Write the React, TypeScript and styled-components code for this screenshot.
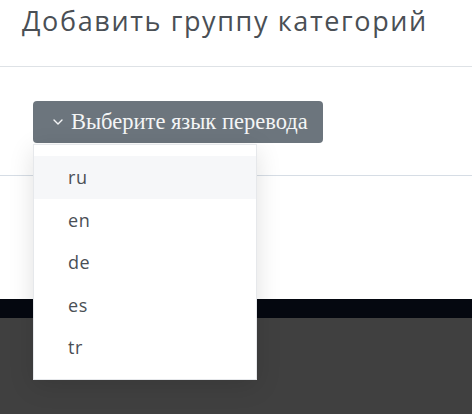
import React from "react";
import styled, { createGlobalStyle } from "styled-components";

const Global = createGlobalStyle`
  html, body { margin: 0; padding: 0; background: #404040; }
  body { font-family: "Open Sans", "Liberation Sans", sans-serif; }
  #root { min-height: 414px; }
`;

const Page = styled.div`
  display: flex;
  flex-direction: column;
  min-height: 414px;
  background: #404040;
`;

const Card = styled.div`
  background: #fff;
  height: 299px;
  display: flex;
  flex-direction: column;
`;

const Header = styled.div`
  height: 67px;
  box-sizing: border-box;
  border-bottom: 1px solid #dee2e6;
  padding: 3px 22px 0;
`;

const Title = styled.h2`
  margin: 0;
  font-family: "Open Sans", "Liberation Sans", sans-serif;
  font-weight: 400;
  font-size: 27px;
  line-height: 36px;
  color: #4a4f55;
  letter-spacing: 1.62px;
`;

const Body = styled.div`
  height: 109px;
  box-sizing: border-box;
  border-bottom: 1px solid #d6dde5;
  padding: 34px 33px 0;
`;

const DropWrap = styled.div`
  position: relative;
  display: inline-block;
`;

const Toggle = styled.button`
  display: flex;
  align-items: center;
  gap: 7px;
  height: 42px;
  width: 290px;
  box-sizing: border-box;
  padding: 0 8px 0 19px;
  border: none;
  border-radius: 4px;
  background: #6c757d;
  color: #f4f5f6;
  font-family: "Liberation Serif", serif;
  font-size: 22.5px;
  white-space: nowrap;
  cursor: pointer;
`;

const Menu = styled.ul`
  position: absolute;
  top: 43px;
  left: 0;
  width: 224px;
  margin: 0;
  padding: 11px 0 10px;
  list-style: none;
  background: #fff;
  border: 1px solid #e6e8eb;
  box-sizing: border-box;
  box-shadow: 0 6px 24px rgba(0, 0, 0, 0.12);
  z-index: 5;
`;

const Item = styled.li<{ $active?: boolean }>`
  height: 42.5px;
  display: flex;
  align-items: center;
  padding-left: 34px;
  font-family: "Open Sans", "Liberation Sans", sans-serif;
  font-size: 18px;
  letter-spacing: 0.6px;
  color: #4a4f55;
  background: ${(p) => (p.$active ? "#f6f7f9" : "transparent")};
`;

const Band = styled.div`
  height: 19px;
  background: #050810;
`;

const Chevron = () => (
  <svg width="12" height="12" viewBox="0 0 12 12" fill="none">
    <path d="M2 4l4 4 4-4" stroke="#f4f5f6" strokeWidth="1.4" strokeLinecap="round" strokeLinejoin="round" />
  </svg>
);

export default function App() {
  const langs = ["ru", "en", "de", "es", "tr"];
  return (
    <Page>
      <Global />
      <Card>
        <Header>
          <Title>Добавить группу категорий</Title>
        </Header>
        <Body>
          <DropWrap>
            <Toggle>
              <Chevron />
              Выберите язык перевода
            </Toggle>
            <Menu>
              {langs.map((l, i) => (
                <Item key={l} $active={i === 0}>
                  {l}
                </Item>
              ))}
            </Menu>
          </DropWrap>
        </Body>
      </Card>
      <Band />
    </Page>
  );
}
